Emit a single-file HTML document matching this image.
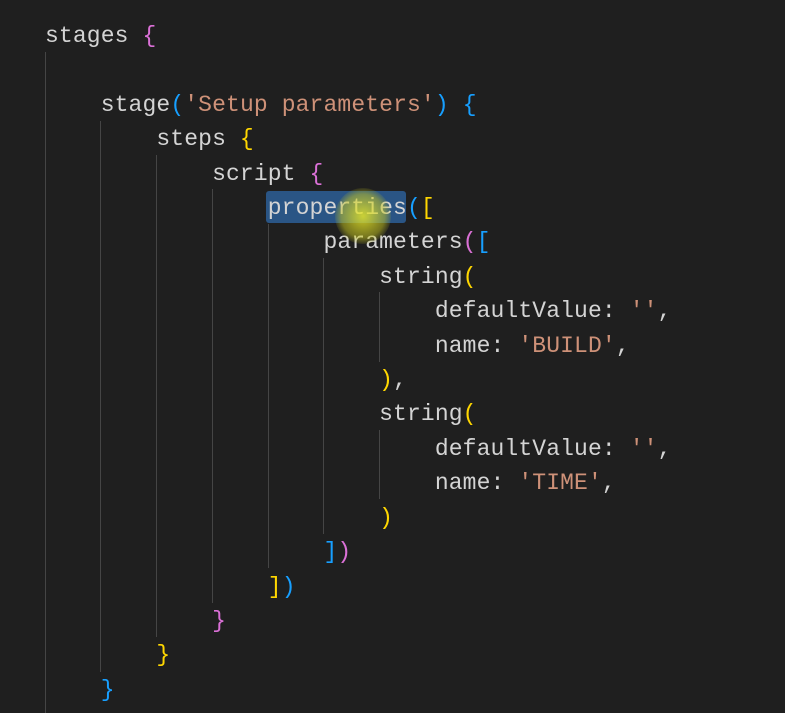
<!DOCTYPE html>
<html><head><style>
html,body{margin:0;padding:0;background:#1f1f1f;width:785px;height:713px;overflow:hidden}
.code{position:absolute;left:45px;top:19px;font-family:"Liberation Mono",monospace;font-size:23px;letter-spacing:0.12px;line-height:34.4px;color:#d4d4d4;white-space:pre}
.s{color:#ce9178}.p{color:#da70d6}.y{color:#ffd700}.b{color:#179fff}
.g{position:absolute;width:1px;background:#454545}
.sel{position:absolute;left:266px;top:191px;width:140px;height:32px;background:#2a5585;border-radius:3px}
.hl{position:absolute;left:335px;top:188px;width:56px;height:56px;border-radius:50%;background:radial-gradient(circle,rgba(230,230,40,.85) 0%,rgba(200,200,30,.5) 55%,rgba(200,200,30,0) 75%)}
</style></head><body>
<div class="sel"></div>
<div class="g" style="left:45px;top:52px;height:661px"></div>
<div class="g" style="left:100px;top:121px;height:551px"></div>
<div class="g" style="left:156px;top:155px;height:482px"></div>
<div class="g" style="left:212px;top:189px;height:414px"></div>
<div class="g" style="left:268px;top:224px;height:344px"></div>
<div class="g" style="left:323px;top:258px;height:276px"></div>
<div class="g" style="left:379px;top:292px;height:70px"></div>
<div class="g" style="left:379px;top:430px;height:69px"></div>
<div class="code">stages <span class="p">{</span>

    stage<span class="b">(</span><span class="s">'Setup parameters'</span><span class="b">)</span> <span class="b">{</span>
        steps <span class="y">{</span>
            script <span class="p">{</span>
                properties<span class="b">(</span><span class="y">[</span>
                    parameters<span class="p">(</span><span class="b">[</span>
                        string<span class="y">(</span>
                            defaultValue: <span class="s">''</span>,
                            name: <span class="s">'BUILD'</span>,
                        <span class="y">)</span>,
                        string<span class="y">(</span>
                            defaultValue: <span class="s">''</span>,
                            name: <span class="s">'TIME'</span>,
                        <span class="y">)</span>
                    <span class="b">]</span><span class="p">)</span>
                <span class="y">]</span><span class="b">)</span>
            <span class="p">}</span>
        <span class="y">}</span>
    <span class="b">}</span></div>
<div class="hl"></div>
</body></html>
